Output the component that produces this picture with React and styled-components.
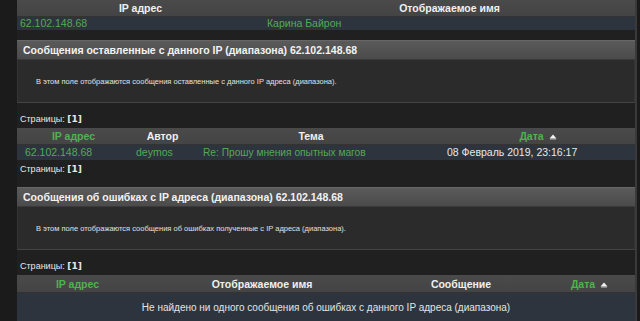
import React from 'react'
import styled, { createGlobalStyle } from 'styled-components'

const GlobalStyle = createGlobalStyle`
	html, body {
		margin: 0;
		padding: 0;
		background: #1b1b1b;
		font-family: "Liberation Sans", Arial, sans-serif;
		color: #e6e6e6;
	}
`

const ip = '62.102.148.68'

const App = () => {
	return (
		<Page>
			<GlobalStyle />
			<Main>
				<Table $cols="247px 1fr">
					<HeadCell>IP адрес</HeadCell>
					<HeadCell>Отображаемое имя</HeadCell>
					<Cell $pad="3px" $green>{ip}</Cell>
					<Cell $pad="3px" $green>Карина Байрон</Cell>
				</Table>

				<Section $top="10px">
					<SectionTitle>Сообщения оставленные с данного IP (диапазона) {ip}</SectionTitle>
					<SectionBody>
						В этом поле отображаются сообщения оставленные с данного IP адреса (диапазона).
					</SectionBody>
				</Section>

				<Pager $top="8px">
					Страницы: <b>[1]</b>
				</Pager>
				<Table $cols="113px 65px 232px 1fr">
					<HeadCell $green>IP адрес</HeadCell>
					<HeadCell>Автор</HeadCell>
					<HeadCell>Тема</HeadCell>
					<HeadCell $green $shift="14px">
						Дата <SortArrow />
					</HeadCell>
					<Cell $pad="8px" $green $tall>{ip}</Cell>
					<Cell $pad="6px" $green $tall>deymos</Cell>
					<Cell $pad="8px" $green $tall $narrow>Re: Прошу мнения опытных магов</Cell>
					<Cell $pad="20px" $tall>08 Февраль 2019, 23:16:17</Cell>
				</Table>
				<Pager $top="1px" $bottom="9px">
					Страницы: <b>[1]</b>
				</Pager>

				<Section>
					<SectionTitle>Сообщения об ошибках с IP адреса (диапазона) {ip}</SectionTitle>
					<SectionBody>
						В этом поле отображаются сообщения об ошибках полученные с IP адреса (диапазона).
					</SectionBody>
				</Section>

				<Pager $top="8px">
					Страницы: <b>[1]</b>
				</Pager>
				<Table $cols="121px 248px 150px 1fr">
					<HeadCell $green $tallHead>IP адрес</HeadCell>
					<HeadCell $tallHead>Отображаемое имя</HeadCell>
					<HeadCell $tallHead>Сообщение</HeadCell>
					<HeadCell $green $tallHead $shift="8px">
						Дата <SortArrow />
					</HeadCell>
					<EmptyCell>Не найдено ни одного сообщения об ошибках с данного IP адреса (диапазона)</EmptyCell>
				</Table>
			</Main>
		</Page>
	)
}

const SortArrow = () => (
	<Arrow viewBox="0 0 8 6" width="8" height="6">
		<path d="M4 0.5 L7.5 4.5 L0.5 4.5 Z" fill="#f2f2f2" />
		<rect x="1" y="4.5" width="6" height="1" fill="#bdbdbd" />
	</Arrow>
)

export default App

const Page = styled.div`
	min-height: 321px;
	background: #1b1b1b;
	padding-left: 17px;
	overflow: hidden;
`
const Main = styled.div`
	width: 618px;
	min-height: 321px;
	background: #202020;
	border-right: 2px solid #3a3a3a;
`
const Table = styled.div`
	display: grid;
	grid-template-columns: ${(p) => p.$cols};
`
const HeadCell = styled.div`
	height: ${(p) => (p.$tallHead ? '18px' : '17px')};
	line-height: ${(p) => (p.$tallHead ? '18px' : '17px')};
	background: linear-gradient(#4a4a4a, #444444);
	border-bottom: 1px solid #333;
	box-sizing: border-box;
	padding-left: ${(p) => p.$shift || '0'};
	text-align: center;
	font-size: 10.5px;
	font-weight: bold;
	color: ${(p) => (p.$green ? '#4fb34f' : '#f0f0f0')};
	white-space: nowrap;
`
const Cell = styled.div`
	height: ${(p) => (p.$tall ? '15px' : '13px')};
	line-height: ${(p) => (p.$tall ? '15px' : '13px')};
	background: #2d343d;
	padding-left: ${(p) => p.$pad};
	font-size: ${(p) => (p.$narrow ? '10.2px' : '10.5px')};
	color: ${(p) => (p.$green ? '#55a955' : '#e8e8e8')};
	white-space: nowrap;
`
const EmptyCell = styled.div`
	grid-column: 1 / -1;
	height: 29px;
	line-height: 29px;
	background: #2d343d;
	text-align: center;
	font-size: 10px;
	color: #e4e4e4;
`
const Arrow = styled.svg`
	vertical-align: 0px;
	margin-left: 2px;
`
const Section = styled.div`
	margin-top: ${(p) => p.$top || '0'};
`
const SectionTitle = styled.div`
	height: 20px;
	line-height: 19px;
	box-sizing: border-box;
	padding-left: 6px;
	background: linear-gradient(#5a5a5a, #4b4b4b);
	border-top: 1px solid #676767;
	border-bottom: 1px solid #3a3a3a;
	font-size: 10.5px;
	font-weight: bold;
	color: #f2f2f2;
	white-space: nowrap;
`
const SectionBody = styled.div`
	height: 43px;
	box-sizing: border-box;
	display: flex;
	align-items: center;
	padding-left: 18px;
	background: #2b2b2b;
	border: 1px solid #353535;
	border-top: none;
	border-bottom: 1px solid #444;
	font-size: 7.5px;
	color: #e0e0e0;
`
const Pager = styled.div`
	margin-top: ${(p) => p.$top || '0'};
	margin-bottom: ${(p) => p.$bottom || '0'};
	padding-left: 3px;
	height: 17px;
	line-height: 17px;
	font-size: 9px;
	color: #e8e8e8;

	b {
		font-family: "DejaVu Sans", sans-serif;
		font-size: 9px;
	}
`
